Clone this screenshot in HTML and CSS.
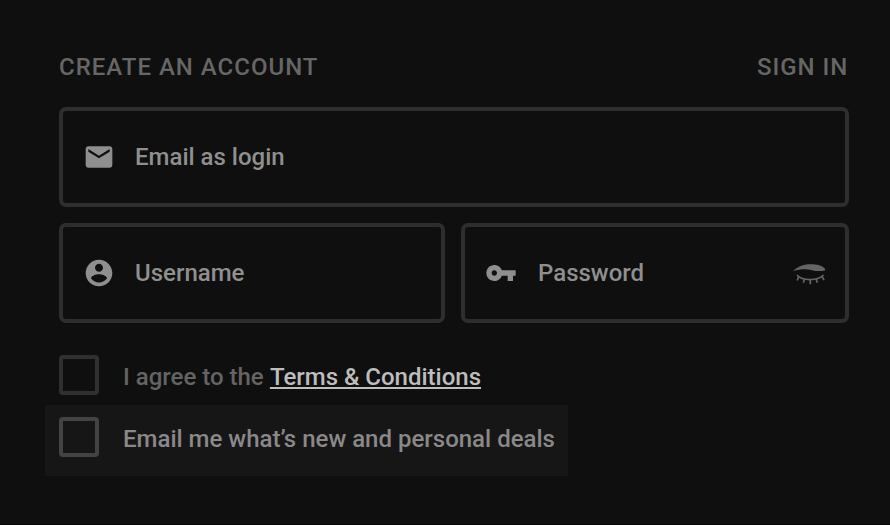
FILE: index.html
```html
<!DOCTYPE html>
<html lang="en">
<head>
<meta charset="utf-8">
<title>Create an account</title>
<link rel="stylesheet" href="styles.css">
</head>
<body>
<form class="signup">
  <header class="head">
    <span class="head-title">CREATE AN ACCOUNT</span>
    <span class="head-link">SIGN IN</span>
  </header>
  <div class="fields">
    <div class="field field-wide">
      <svg class="icon" viewBox="0 0 24 24"><path d="M20 4H4c-1.1 0-1.99.9-1.99 2L2 18c0 1.1.9 2 2 2h16c1.1 0 2-.9 2-2V6c0-1.1-.9-2-2-2zm0 4l-8 5-8-5V6l8 5 8-5v2z"/></svg>
      <span class="field-label">Email as login</span>
    </div>
    <div class="field">
      <svg class="icon" viewBox="0 0 24 24"><path d="M12 2C6.480 2 2 6.480 2 12s4.480 10 10 10 10-4.480 10-10S17.520 2 12 2zm0 3c1.660 0 3 1.340 3 3s-1.340 3-3 3-3-1.340-3-3 1.340-3 3-3zm0 14.200c-2.500 0-4.710-1.280-6-3.220.030-1.990 4-3.080 6-3.080 1.990 0 5.970 1.090 6 3.080-1.290 1.940-3.500 3.220-6 3.220z"/></svg>
      <span class="field-label">Username</span>
    </div>
    <div class="field field-password">
      <svg class="icon" viewBox="0 0 24 24"><path d="M12.650 10C11.830 7.670 9.610 6 7 6c-3.310 0-6 2.690-6 6s2.690 6 6 6c2.610 0 4.830-1.670 5.650-4H17v4h4v-4h2v-4H12.650zM7 14c-1.100 0-2-.9-2-2s.9-2 2-2 2 .9 2 2-.9 2-2 2z"/></svg>
      <span class="field-label">Password</span>
      <svg class="eye" viewBox="0 0 34 22">
        <path class="eye-lid" d="M0 8C5 3.600 10 1.300 17 1.300c7.500 0 12.500 1.400 15 4.500v1.600C28 8.500 23 8.200 19 7.200 13 5.700 7 6.200 0 8z"/>
        <path class="eye-lash" d="M4 12c3 3.400 7 4.600 13 4.600s10-1.200 13.500-4.600M5.800 13.200l-1.600 4.300M11.400 15.700l-1 4M17.300 16.600v4.600M23.200 15.700l1 4M29 13.200l2 4"/>
      </svg>
    </div>
  </div>
  <label class="check check-terms">
    <span class="box"></span>
    <span>I agree to the <a class="terms">Terms &amp; Conditions</a></span>
  </label>
  <label class="check check-deals">
    <span class="box"></span>
    <span>Email me what’s new and personal deals</span>
  </label>
</form>
</body>
</html>
```
FILE: styles.css
```css
* { box-sizing: border-box; }
body {
  margin: 0;
  height: 525px;
  background: #0f0f0f;
  border-bottom: 1px solid #050304;
  font: 500 24px/28px Roboto, sans-serif;
  overflow: hidden;
}
.signup { padding: 53px 41px 0 59px; }
.head {
  display: flex;
  justify-content: space-between;
  height: 54px;
  padding-right: 0.6px;
  color: #666;
  letter-spacing: 1px;
}
.fields {
  display: grid;
  grid-template-columns: 386px 388px;
  grid-auto-rows: 100px;
  gap: 16px;
}
.field {
  display: flex;
  align-items: center;
  padding: 0 20px;
  border: 4px solid #2e2e2e;
  border-radius: 7px;
  color: #8f8f8f;
}
.field-wide { grid-column: span 2; }
.icon {
  width: 32px;
  height: 32px;
  margin-right: 20px;
  fill: #8f8f8f;
}
.field-password .icon { margin-right: 21px; }
.eye {
  width: 34px;
  height: 22px;
  margin: 2px -2px 0 auto;
}
.eye-lid { fill: #646464; }
.eye-lash { fill: none; stroke: #646464; stroke-width: 1.7; }
.check {
  display: flex;
  gap: 24px;
  line-height: 44px;
  white-space: nowrap;
}
.check-terms { height: 40px; margin-top: 32px; color: #646464; }
.check-deals {
  width: 523px;
  height: 71px;
  margin: 10px 0 0 -14px;
  padding: 12px 0 0 14px;
  background: #161616;
  color: #8a8888;
}
.box {
  flex: none;
  width: 40px;
  height: 40px;
  border: 4px solid #303030;
  border-radius: 4px;
}
.check-deals .box { border-color: #434343; }
.terms {
  margin-left: 0.2px;
  color: #bdbdbd;
  text-decoration: underline;
  text-decoration-thickness: 2px;
  text-underline-offset: 2px;
  text-decoration-skip-ink: none;
}
```
